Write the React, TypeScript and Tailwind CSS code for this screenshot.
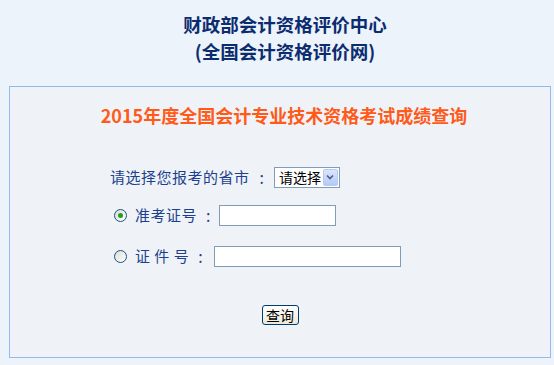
import React from "react";

function Radio({ checked }: { checked?: boolean }) {
  return (
    <span className="relative inline-flex h-[13px] w-[13px] items-center justify-center rounded-full border border-[#1c5180] bg-gradient-to-br from-[#dcdcd6] to-[#ffffff]">
      {checked && <span className="h-[5px] w-[5px] rounded-full bg-[#21a121]" />}
    </span>
  );
}

export default function App() {
  return (
    <div
      className="min-h-screen w-full bg-[#edf3fa] pt-[11px]"
      style={{ fontFamily: '"Noto Sans CJK SC", "Noto Sans", sans-serif' }}
    >
      <div className="pl-[16px] text-center text-[18.5px] font-bold leading-[27px] text-[#0c2c70]">
        <div>财政部会计资格评价中心</div>
        <div>(全国会计资格评价网)</div>
      </div>

      <div className="ml-[9px] mt-[21px] h-[272px] w-[542px] border border-[#91bbea] bg-[#eff3f7]">
        <div className="pl-[8px] pt-[15px] text-center text-[18px] font-bold leading-[26px] text-[#ff5a1a]">
          2015年度全国会计专业技术资格考试成绩查询
        </div>

        <div className="mt-[38px] flex h-[22px] items-center pl-[100px]">
          <span className="text-[15px] tracking-[0.5px] text-[#1c3f8f]">请选择您报考的省市</span>
          <span className="ml-[10px] text-[16px] text-[#1c3f8f]">:</span>
          <div className="ml-[10px] flex h-[21px] w-[66px] items-center border border-[#7f9db9] bg-white pl-[4px] pr-[1px]">
            <span className="flex-1 text-[14px] leading-none text-black">请选择</span>
            <span className="flex h-[17px] w-[15px] items-center justify-center rounded-[2px] border border-[#b7c9f1] bg-gradient-to-b from-[#dbe6fd] to-[#b6c9f7]">
              <svg width="8" height="6" viewBox="0 0 8 6">
                <path d="M1 1.5 L4 4.5 L7 1.5" fill="none" stroke="#4d6185" strokeWidth="1.6" />
              </svg>
            </span>
          </div>
        </div>

        <div className="mt-[16px] flex h-[22px] items-center pl-[104px]">
          <Radio checked />
          <span className="ml-[8px] text-[15px] tracking-[0.5px] text-[#1c3f8f]">准考证号</span>
          <span className="ml-[9px] text-[16px] text-[#1c3f8f]">:</span>
          <div className="ml-[9px] h-[21px] w-[117px] border border-[#7f9db9] bg-white" />
        </div>

        <div className="mt-[19px] flex h-[22px] items-center pl-[104px]">
          <Radio />
          <span className="ml-[8px] text-[15px] tracking-[0.5px] text-[#1c3f8f]">证&nbsp;件&nbsp;号</span>
          <span className="ml-[9px] text-[16px] text-[#1c3f8f]">:</span>
          <div className="ml-[11px] h-[21px] w-[187px] border border-[#7f9db9] bg-white" />
        </div>

        <div className="mt-[38px] flex justify-center">
          <button className="flex h-[20px] w-[37px] items-center justify-center rounded-[3px] border border-[#003c74] bg-gradient-to-b from-[#ffffff] to-[#ece9d8] text-[14px] leading-none text-black">
            查询
          </button>
        </div>
      </div>
    </div>
  );
}
